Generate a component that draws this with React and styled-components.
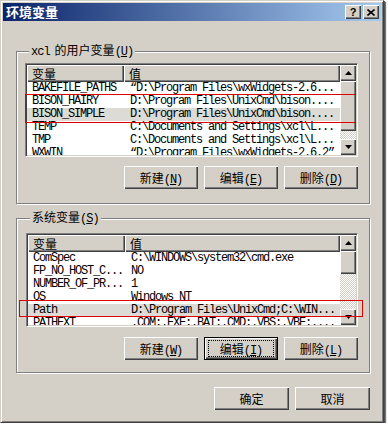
import React from 'react';
import styled, { createGlobalStyle, css } from 'styled-components';

const GlobalStyle = createGlobalStyle`
  body {
    margin: 0;
    background: #fff;
    font-family: "Noto Sans CJK SC", sans-serif;
  }
`;

const raised = css`
  box-shadow: inset 1px 1px #fff, inset -1px -1px #404040, inset -2px -2px #808080;
`;

const Window = styled.div`
  box-sizing: border-box;
  width: 384px;
  height: 423px;
  background: #d4d0c8;
  border: 1px solid;
  border-color: #d4d0c8 #404040 #404040 #d4d0c8;
  box-shadow: inset 1px 1px #fff, inset -1px -1px #808080, 1px 1px 0 #505050, 2px 2px 1px #777;
  padding: 2px;
  display: flex;
  flex-direction: column;
`;

const TitleBar = styled.div`
  height: 18px;
  display: flex;
  align-items: center;
  padding: 0 2px;
  background: linear-gradient(to right, #0a246a, #a6caf0);
`;

const Title = styled.span`
  color: #fff;
  font-weight: bold;
  font-size: 13px;
  line-height: 18px;
  margin-left: 1px;
`;

const TitleButtons = styled.div`
  margin-left: auto;
  display: flex;
  gap: 2px;
`;

const TitleButton = styled.div`
  width: 16px;
  height: 14px;
  background: #d4d0c8;
  ${raised};
  display: flex;
  align-items: center;
  justify-content: center;
  font: bold 11px "Liberation Sans", sans-serif;
  color: #000;
`;

const Content = styled.div`
  padding: 22px 11px 0 13px;
  display: flex;
  flex-direction: column;
`;

const Group = styled.fieldset`
  margin: 0 0 ${p => p.$gap || 0}px;
  padding: ${p => p.$pad};
  border: 1px solid #808080;
  box-shadow: 1px 1px 0 #fff, inset 1px 1px 0 #fff;
  min-width: 0;
`;

const Legend = styled.legend`
  margin-left: 4px;
  padding: 0 2px;
  font-size: 12px;
  line-height: 14px;
  background: #d4d0c8;
  color: #000;
`;

const Mono = styled.span`
  font-family: "Liberation Mono", monospace;
  font-size: 12px;
  letter-spacing: -1px;
  margin-right: 5px;
`;

const ListWrap = styled.div`
  position: relative;
`;

const List = styled.div`
  box-sizing: border-box;
  height: 94px;
  border: 1px solid;
  border-color: #808080 #fff #fff #808080;
  box-shadow: inset 1px 1px #404040, inset -1px -1px #d4d0c8;
  padding: 1px;
  background: #fff;
  display: flex;
  overflow: hidden;
`;

const ListBody = styled.div`
  flex: 1;
  min-width: 0;
  overflow: hidden;
`;

const HeaderRow = styled.div`
  display: grid;
  grid-template-columns: 97px 1fr;
  height: 17px;
`;

const HeaderCell = styled.div`
  background: #d4d0c8;
  ${raised};
  padding-left: 5px;
  font-size: 12px;
  line-height: 17px;
  color: #000;
`;

const Row = styled.div`
  display: grid;
  grid-template-columns: 97px 1fr;
  height: 13px;
  background: ${p => (p.$selected ? '#dddbd6' : 'transparent')};
`;

const Cell = styled.div`
  padding-left: ${p => p.$pad || 5}px;
  font-family: "Liberation Mono", monospace;
  font-size: 12px;
  letter-spacing: -1.2px;
  line-height: 13px;
  color: #000;
  white-space: nowrap;
  overflow: hidden;
`;

const ScrollBar = styled.div`
  width: 16px;
  display: flex;
  flex-direction: column;
  background: repeating-conic-gradient(#fff 0 25%, #d4d0c8 0 50%) 0 0 / 2px 2px;
`;

const ScrollButton = styled.div`
  width: 16px;
  height: 16px;
  flex: none;
  background: #d4d0c8;
  ${raised};
  display: flex;
  align-items: center;
  justify-content: center;
`;

const Thumb = styled.div`
  height: ${p => p.$h}px;
  flex: none;
  background: #d4d0c8;
  ${raised};
`;

const Track = styled.div`
  flex: 1;
`;

const Mark = styled.div`
  position: absolute;
  left: ${p => p.$x}px;
  top: ${p => p.$y}px;
  width: ${p => p.$w}px;
  height: ${p => p.$h}px;
  box-sizing: border-box;
  border: 1px solid #e00000;
  pointer-events: none;
`;

const ButtonRow = styled.div`
  display: flex;
  justify-content: flex-end;
  gap: 6px;
  margin-top: ${p => p.$top}px;
`;

const Button = styled.button`
  position: relative;
  box-sizing: border-box;
  width: ${p => p.$w || 74}px;
  height: 23px;
  padding: 0;
  border: none;
  background: #d4d0c8;
  ${raised};
  font-family: "Noto Sans CJK SC", sans-serif;
  font-size: 12px;
  color: #000;

  ${p =>
    p.$focused &&
    css`
      box-shadow: inset 0 0 0 1px #000, inset 2px 2px #fff, inset -2px -2px #404040,
        inset -3px -3px #808080;
      &::after {
        content: '';
        position: absolute;
        inset: 3px 4px;
        border: 1px dotted #000;
      }
    `}
`;

const Key = styled.span`
  font-family: "Liberation Mono", monospace;
  letter-spacing: -1px;
  u {
    text-underline-offset: 1px;
  }
`;

const Footer = styled.div`
  display: flex;
  justify-content: flex-end;
  gap: 6px;
  margin-top: 14px;
`;

const Arrow = ({ down }) => (
  <svg width="7" height="4" viewBox="0 0 7 4">
    <polygon points={down ? '0,0 7,0 3.5,4' : '3.5,0 7,4 0,4'} fill="#000" />
  </svg>
);

const Label = ({ text, k }) => (
  <>
    {text}
    <Key>
      (<u>{k}</u>)
    </Key>
  </>
);

const userVars = [
  ['BAKEFILE_PATHS', '“D:\\Program Files\\wxWidgets-2.6...'],
  ['BISON_HAIRY', 'D:\\Program Files\\UnixCmd\\bison....'],
  ['BISON_SIMPLE', 'D:\\Program Files\\UnixCmd\\bison....', true],
  ['TEMP', 'C:\\Documents and Settings\\xcl\\L...'],
  ['TMP', 'C:\\Documents and Settings\\xcl\\L...'],
  ['WXWIN', '“D:\\Program Files\\wxWidgets-2.6.2”'],
];

const sysVars = [
  ['ComSpec', 'C:\\WINDOWS\\system32\\cmd.exe'],
  ['FP_NO_HOST_C...', 'NO'],
  ['NUMBER_OF_PR...', '1'],
  ['OS', 'Windows NT'],
  ['Path', 'D:\\Program Files\\UnixCmd;C:\\WIN...', true],
  ['PATHEXT', '.COM;.EXE;.BAT;.CMD;.VBS;.VBE;....'],
];

const VarList = ({ rows, thumb }) => (
  <List>
    <ListBody>
      <HeaderRow>
        <HeaderCell>变量</HeaderCell>
        <HeaderCell>值</HeaderCell>
      </HeaderRow>
      {rows.map(([name, value, selected]) => (
        <Row key={name} $selected={selected}>
          <Cell>{name}</Cell>
          <Cell $pad={6}>{value}</Cell>
        </Row>
      ))}
    </ListBody>
    <ScrollBar>
      <ScrollButton>
        <Arrow />
      </ScrollButton>
      <Thumb $h={thumb} />
      <Track />
      <ScrollButton>
        <Arrow down />
      </ScrollButton>
    </ScrollBar>
  </List>
);

export default function App() {
  return (
    <>
      <GlobalStyle />
      <Window>
        <TitleBar>
          <Title>环境变量</Title>
          <TitleButtons>
            <TitleButton>?</TitleButton>
            <TitleButton>
              <svg width="8" height="7" viewBox="0 0 8 7">
                <path d="M0.5 0.5 L7.5 6.5 M7.5 0.5 L0.5 6.5" stroke="#000" strokeWidth="1.6" />
              </svg>
            </TitleButton>
          </TitleButtons>
        </TitleBar>

        <Content>
          <Group $pad="4px 11px 14px 8px" $gap={6}>
            <Legend>
              <Mono>xcl</Mono>的用户变量<Key>(<u>U</u>)</Key>
            </Legend>
            <ListWrap>
              <VarList rows={userVars} thumb={50} />
              <Mark $x={0} $y={31} $w={331} $h={29} />
            </ListWrap>
            <ButtonRow $top={9}>
              <Button>
                <Label text="新建" k="N" />
              </Button>
              <Button>
                <Label text="编辑" k="E" />
              </Button>
              <Button>
                <Label text="删除" k="D" />
              </Button>
            </ButtonRow>
          </Group>

          <Group $pad="7px 11px 12px 9px">
            <Legend>
              系统变量<Key>(<u>S</u>)</Key>
            </Legend>
            <ListWrap>
              <VarList rows={sysVars} thumb={23} />
              <Mark $x={-7} $y={67} $w={344} $h={17} />
            </ListWrap>
            <ButtonRow $top={10}>
              <Button>
                <Label text="新建" k="W" />
              </Button>
              <Button $focused>
                <Label text="编辑" k="I" />
              </Button>
              <Button>
                <Label text="删除" k="L" />
              </Button>
            </ButtonRow>
          </Group>

          <Footer>
            <Button $w={75}>确定</Button>
            <Button $w={75}>取消</Button>
          </Footer>
        </Content>
      </Window>
    </>
  );
}
